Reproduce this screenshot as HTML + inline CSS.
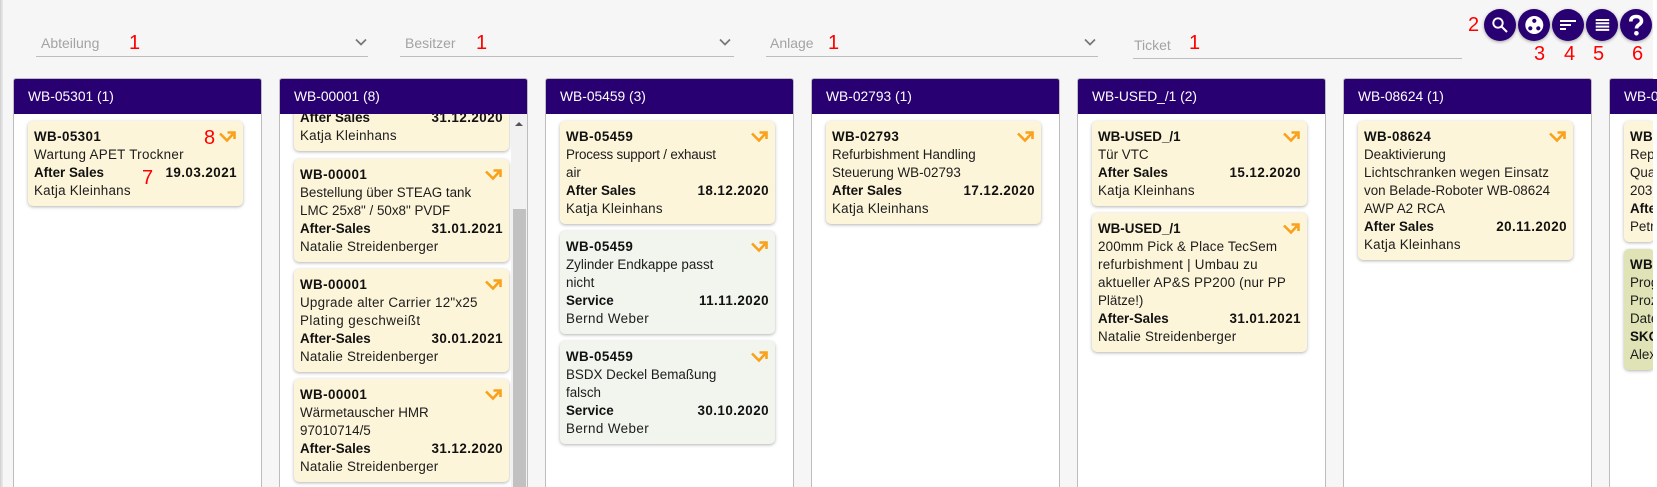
<!DOCTYPE html>
<html lang="de"><head><meta charset="utf-8"><title>Board</title>
<style>
html,body{margin:0;padding:0;width:1657px;height:487px;overflow:hidden}
body{background:#f6f6f6;font-family:"Liberation Sans",Arial,sans-serif;color:#1a1a1a}
#w{position:relative;width:1657px;height:487px;overflow:hidden;background:#f6f6f6}
.strip{position:absolute;left:0;top:0;width:3px;height:487px;background:linear-gradient(90deg,#cfcfcf,#ececec)}
.rstrip{position:absolute;left:1653px;top:0;width:4px;height:487px;background:#fff}
.f{position:absolute;height:1px;background:#bdbdbd;top:56px}
.l{position:absolute;top:34px;font-size:14px;line-height:18px;color:#a3a3a3}
.ch{position:absolute;top:38px;width:12px;height:8px}
.b{position:absolute;top:9px;width:32px;height:32px;border-radius:50%;background:#290072;box-shadow:0 1px 3px rgba(0,0,0,.35)}
.b svg{position:absolute;left:0;top:0}
.r{position:absolute;color:#f00;font-size:20px;line-height:24px;font-family:"Liberation Sans",sans-serif}
.col{position:absolute;top:78px;width:247px;height:408px;background:#fff;border:1px solid #bdbdbd;border-bottom:0;border-radius:3px 3px 0 0;overflow:hidden}
.h{position:absolute;left:0;top:0;right:0;height:35px;background:#290072;color:#fff;font-size:13.8px;line-height:35px;padding-left:14px;z-index:3}
.c{position:absolute;left:14px;width:215px;box-sizing:border-box;padding:6.5px 6px;border-radius:5px;background:#fdf5d9;box-shadow:0 1px 3px rgba(0,0,0,.3);font-size:13.4px;line-height:18px;color:#1c1c1c;white-space:nowrap}
.c.g{background:#f1f5ee}.c.o{background:#dfe3b5}
.c b{font-weight:700;color:#111}
.c b.t{letter-spacing:.4px}
.c .d{float:right;font-weight:700;color:#111;letter-spacing:.45px}
.c .n{letter-spacing:.25px}
.c svg{position:absolute;right:7px;top:10px}
.sb{position:absolute;left:231px;top:35px;width:16px;height:373px;background:#f1f1f1;z-index:2;overflow:hidden}
.th{position:absolute;left:2px;top:95px;width:13px;height:278px;background:#c1c1c1}
.up{position:absolute;left:4px;top:8px;width:0;height:0;border-left:4px solid transparent;border-right:4px solid transparent;border-bottom:4px solid #555}
</style></head><body><div id="w">
<div class="strip"></div>

<span class="l" style="left:41px">Abteilung</span><span class="r" style="left:129px;top:31px">1</span>
<svg class="ch" style="left:355px" viewBox="0 0 12 8"><path d="M1 1.500l5 5 5-5" fill="none" stroke="#777" stroke-width="1.700"/></svg>
<div class="f" style="left:36px;width:332px"></div>

<span class="l" style="left:405px">Besitzer</span><span class="r" style="left:476px;top:31px">1</span>
<svg class="ch" style="left:719px" viewBox="0 0 12 8"><path d="M1 1.500l5 5 5-5" fill="none" stroke="#777" stroke-width="1.700"/></svg>
<div class="f" style="left:400px;width:334px"></div>

<span class="l" style="left:770px">Anlage</span><span class="r" style="left:828px;top:31px">1</span>
<svg class="ch" style="left:1084px" viewBox="0 0 12 8"><path d="M1 1.500l5 5 5-5" fill="none" stroke="#777" stroke-width="1.700"/></svg>
<div class="f" style="left:766px;width:332px"></div>

<span class="l" style="left:1134px;top:36px">Ticket</span><span class="r" style="left:1189px;top:31px">1</span>
<div class="f" style="left:1133px;width:329px;top:58px"></div>

<span class="r" style="left:1468px;top:13px">2</span>
<div class="b" style="left:1484px"><svg width="32" height="32" viewBox="0 0 32 32"><circle cx="14" cy="14" r="4.700" fill="none" stroke="#fff" stroke-width="1.900"/><path d="M17.500 17.500l5.500 5.500" stroke="#fff" stroke-width="2"/></svg></div>
<div class="b" style="left:1518px"><svg width="32" height="32" viewBox="0 0 32 32"><circle cx="16.300" cy="16" r="9" fill="#fff"/><circle cx="16.300" cy="11.800" r="2.100" fill="#290072"/><circle cx="12.300" cy="19.300" r="2.100" fill="#290072"/><circle cx="20.300" cy="19.300" r="2.100" fill="#290072"/></svg></div>
<div class="b" style="left:1552px"><svg width="32" height="32" viewBox="0 0 32 32"><path d="M8 11h16v2H8zM8 15h11v2H8zM8 19h6v2H8z" fill="#fff"/></svg></div>
<div class="b" style="left:1586px"><svg width="32" height="32" viewBox="0 0 32 32"><path d="M9.700 10h13.500v2H9.700zM9.700 13.300h13.500v2H9.700zM9.700 16.600h13.500v2H9.700zM9.700 19.900h13.500v2H9.700z" fill="#fff"/></svg></div>
<div class="b" style="left:1620px"><svg width="32" height="32" viewBox="0 0 32 32"><path d="M10.800 12.500c0-3.500 2.300-5 5.400-5s5.300 1.700 5.300 4.500c0 3.800-5 3.500-5 7.500" fill="none" stroke="#fff" stroke-width="3.600"/><circle cx="16.400" cy="24.300" r="2.300" fill="#fff"/></svg></div>
<span class="r" style="left:1534px;top:42px">3</span>
<span class="r" style="left:1564px;top:42px">4</span>
<span class="r" style="left:1593px;top:42px">5</span>
<span class="r" style="left:1632px;top:42px">6</span>

<div class="col" style="left:13px"><div class="h">WB-05301 (1)</div>
<div class="c" style="top:42px"><svg width="17" height="12" viewBox="0 0 17 12"><path d="M1 2.500l7 7 6-6.500M8.500 1.500h7v6.500" fill="none" stroke="#f9a11b" stroke-width="2.600"/></svg><b class="t">WB-05301</b><br><span class="n" style="letter-spacing:.3px">Wartung APET Trockner</span><br><span class="d">19.03.2021</span><b>After Sales</b><br><span class="n">Katja Kleinhans</span></div>
</div>

<div class="col" style="left:279px"><div class="h">WB-00001 (8)</div>
<div class="sb"><div class="up"></div><div class="th"></div></div>
<div class="c" style="top:-13px"><br><br><span class="d">31.12.2020</span><b>After Sales</b><br><span class="n">Katja Kleinhans</span></div>
<div class="c" style="top:80px"><svg width="17" height="12" viewBox="0 0 17 12"><path d="M1 2.500l7 7 6-6.500M8.500 1.500h7v6.500" fill="none" stroke="#f9a11b" stroke-width="2.600"/></svg><b class="t">WB-00001</b><br>Bestellung über STEAG tank<br>LMC 25x8" / 50x8" PVDF<br><span class="d">31.01.2021</span><b>After-Sales</b><br><span class="n" style="letter-spacing:.2px">Natalie Streidenberger</span></div>
<div class="c" style="top:190px"><svg width="17" height="12" viewBox="0 0 17 12"><path d="M1 2.500l7 7 6-6.500M8.500 1.500h7v6.500" fill="none" stroke="#f9a11b" stroke-width="2.600"/></svg><b class="t">WB-00001</b><br><span class="n">Upgrade alter Carrier 12"x25</span><br><span class="n" style="letter-spacing:.45px">Plating geschweißt</span><br><span class="d">30.01.2021</span><b>After-Sales</b><br><span class="n" style="letter-spacing:.2px">Natalie Streidenberger</span></div>
<div class="c" style="top:300px"><svg width="17" height="12" viewBox="0 0 17 12"><path d="M1 2.500l7 7 6-6.500M8.500 1.500h7v6.500" fill="none" stroke="#f9a11b" stroke-width="2.600"/></svg><b class="t">WB-00001</b><br>Wärmetauscher HMR<br>97010714/5<br><span class="d">31.12.2020</span><b>After-Sales</b><br><span class="n" style="letter-spacing:.2px">Natalie Streidenberger</span></div>
</div>

<div class="col" style="left:545px"><div class="h">WB-05459 (3)</div>
<div class="c" style="top:42px"><svg width="17" height="12" viewBox="0 0 17 12"><path d="M1 2.500l7 7 6-6.500M8.500 1.500h7v6.500" fill="none" stroke="#f9a11b" stroke-width="2.600"/></svg><b class="t">WB-05459</b><br><span style="letter-spacing:-.2px">Process support / exhaust</span><br>air<br><span class="d">18.12.2020</span><b>After Sales</b><br><span class="n">Katja Kleinhans</span></div>
<div class="c g" style="top:152px"><svg width="17" height="12" viewBox="0 0 17 12"><path d="M1 2.500l7 7 6-6.500M8.500 1.500h7v6.500" fill="none" stroke="#f9a11b" stroke-width="2.600"/></svg><b class="t">WB-05459</b><br>Zylinder Endkappe passt<br>nicht<br><span class="d">11.11.2020</span><b>Service</b><br><span class="n" style="letter-spacing:.4px">Bernd Weber</span></div>
<div class="c g" style="top:262px"><svg width="17" height="12" viewBox="0 0 17 12"><path d="M1 2.500l7 7 6-6.500M8.500 1.500h7v6.500" fill="none" stroke="#f9a11b" stroke-width="2.600"/></svg><b class="t">WB-05459</b><br>BSDX Deckel Bemaßung<br>falsch<br><span class="d">30.10.2020</span><b>Service</b><br><span class="n" style="letter-spacing:.4px">Bernd Weber</span></div>
</div>

<div class="col" style="left:811px"><div class="h">WB-02793 (1)</div>
<div class="c" style="top:42px"><svg width="17" height="12" viewBox="0 0 17 12"><path d="M1 2.500l7 7 6-6.500M8.500 1.500h7v6.500" fill="none" stroke="#f9a11b" stroke-width="2.600"/></svg><b class="t">WB-02793</b><br>Refurbishment Handling<br>Steuerung WB-02793<br><span class="d">17.12.2020</span><b>After Sales</b><br><span class="n">Katja Kleinhans</span></div>
</div>

<div class="col" style="left:1077px"><div class="h">WB-USED_/1 (2)</div>
<div class="c" style="top:42px"><svg width="17" height="12" viewBox="0 0 17 12"><path d="M1 2.500l7 7 6-6.500M8.500 1.500h7v6.500" fill="none" stroke="#f9a11b" stroke-width="2.600"/></svg><b>WB-USED_/1</b><br>Tür VTC<br><span class="d">15.12.2020</span><b>After Sales</b><br><span class="n">Katja Kleinhans</span></div>
<div class="c" style="top:134px"><svg width="17" height="12" viewBox="0 0 17 12"><path d="M1 2.500l7 7 6-6.500M8.500 1.500h7v6.500" fill="none" stroke="#f9a11b" stroke-width="2.600"/></svg><b>WB-USED_/1</b><br><span style="letter-spacing:.15px">200mm Pick &amp; Place TecSem</span><br><span class="n">refurbishment | Umbau zu</span><br><span style="letter-spacing:.2px">aktueller AP&amp;S PP200 (nur PP</span><br>Plätze!)<br><span class="d">31.01.2021</span><b>After-Sales</b><br><span class="n" style="letter-spacing:.2px">Natalie Streidenberger</span></div>
</div>

<div class="col" style="left:1343px"><div class="h">WB-08624 (1)</div>
<div class="c" style="top:42px"><svg width="17" height="12" viewBox="0 0 17 12"><path d="M1 2.500l7 7 6-6.500M8.500 1.500h7v6.500" fill="none" stroke="#f9a11b" stroke-width="2.600"/></svg><b class="t">WB-08624</b><br>Deaktivierung<br><span style="letter-spacing:.15px">Lichtschranken wegen Einsatz</span><br>von Belade-Roboter WB-08624<br>AWP A2 RCA<br><span class="d">20.11.2020</span><b>After Sales</b><br><span class="n">Katja Kleinhans</span></div>
</div>

<div class="col" style="left:1609px"><div class="h" style="white-space:nowrap">WB-00000 (2)</div>
<div class="c" style="top:42px;left:14px;width:30px;overflow:visible"><b class="t">WB-00000</b><br>Reparatur<br>Qualität<br>20300<br><b>After Sales</b><br>Petra Müller</div>
<div class="c o" style="top:170px;width:30px;overflow:visible"><b class="t">WB-00000</b><br>Programm<br>Prozess<br>Daten<br><b>SKO</b><br>Alexander</div>
</div>
<div class="rstrip"></div>

<span class="r" style="left:204px;top:126px">8</span>
<span class="r" style="left:142px;top:166px">7</span>
</div></body></html>
